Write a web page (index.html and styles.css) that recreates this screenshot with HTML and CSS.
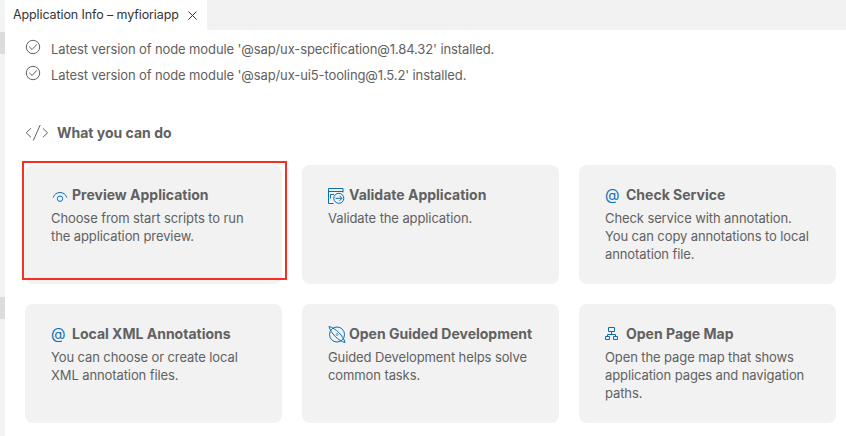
FILE: index.html
```html
<!DOCTYPE html>
<html lang="en">
<head>
<meta charset="utf-8">
<title>Application Info – myfioriapp</title>
<link rel="stylesheet" href="styles.css">
</head>
<body>
<aside class="gutter"><span class="mark"></span><span class="mark"></span></aside>
<main class="editor">
  <header class="tabs">
    <div class="tab"><span class="tab-title">Application Info – myfioriapp</span>
      <svg class="close" width="9" height="9" viewBox="0 0 9 9"><path d="M.5.5l8 8M8.5.5l-8 8"/></svg>
    </div>
  </header>
  <ul class="checks">
    <li><svg class="check" width="16" height="16" viewBox="0 0 16 16"><circle cx="8" cy="8" r="6.7"/><path d="M4.3 7.8l2.8 2.7 4.8-5.2"/></svg><span>Latest version of node module '@sap/ux-specification@1.84.32' installed.</span></li>
    <li><svg class="check" width="16" height="16" viewBox="0 0 16 16"><circle cx="8" cy="8" r="6.7"/><path d="M4.3 7.8l2.8 2.7 4.8-5.2"/></svg><span>Latest version of node module '@sap/ux-ui5-tooling@1.5.2' installed.</span></li>
  </ul>
  <h2 class="section"><svg width="24" height="17" viewBox="0 0 24 17"><path d="M6 4.3L1.2 8.8 6 13.3M17.8 4.3l4.8 4.5-4.8 4.5M15.2 1L8.3 16.5"/></svg><span>What you can do</span></h2>
  <section class="grid">
    <article class="card selected">
      <h3><svg width="18" height="18" viewBox="0 0 18 18"><path d="M2.2 11.5C3.2 8.2 6 6.5 9 6.5s5.8 1.7 6.8 5"/><circle cx="9" cy="12.7" r="2.7"/></svg><span>Preview Application</span></h3>
      <p>Choose from start scripts to run<br>the application preview.</p>
    </article>
    <article class="card">
      <h3><svg width="18" height="18" viewBox="0 0 18 18"><path d="M5.5 17.5h-5v-15h14.500v4M.5 5.5h14.500M2.500 12.500v-4h3.500"/><circle cx="10.8" cy="12.3" r="5"/><path d="M7.500 12.300h6.300M11.500 9.800l2.500 2.500-2.500 2.500"/></svg><span>Validate Application</span></h3>
      <p>Validate the application.</p>
    </article>
    <article class="card">
      <h3><i class="at">@</i><span>Check Service</span></h3>
      <p>Check service with annotation.<br>You can copy annotations to local<br>annotation file.</p>
    </article>
    <article class="card">
      <h3><i class="at">@</i><span>Local XML Annotations</span></h3>
      <p>You can choose or create local<br>XML annotation files.</p>
    </article>
    <article class="card">
      <h3><svg width="18" height="18" viewBox="0 0 18 18"><circle cx="9" cy="9.500" r="7.500"/><path d="M1 1.500C7.500 3 15.500 11 17 17.500 10.500 16 2.500 8 1 1.500z"/><circle class="thin" cx="9" cy="9.500" r="1"/></svg><span>Open Guided Development</span></h3>
      <p>Guided Development helps solve<br>common tasks.</p>
    </article>
    <article class="card">
      <h3><svg width="18" height="18" viewBox="0 0 18 18"><path d="M3.500 2.500h6v4h-6zM.5 11.500h4v3h-4zM8.500 11.500h4v3h-4zM6.500 6.500v3M2.500 11.500v-2h8v2"/></svg><span>Open Page Map</span></h3>
      <p>Open the page map that shows<br>application pages and navigation<br>paths.</p>
    </article>
  </section>
</main>
</body>
</html>
```
FILE: styles.css
```css
* { box-sizing: border-box; }
body {
  margin: 0;
  height: 436px;
  display: flex;
  overflow: hidden;
  background: #fff;
  color: #616161;
  font-family: Inter, "Liberation Sans", sans-serif;
  font-size: 13px;
}
svg { fill: none; stroke: currentColor; flex: none; }
.gutter {
  width: 5px;
  padding-top: 32px;
  display: flex;
  flex-direction: column;
  gap: 243px;
  background: #f3f3f3;
}
.mark { height: 22px; background: #dcdcdc; }
.editor { flex: 1; }
.tabs { height: 30px; background: #f2f2f2; }
.tab {
  width: 202px;
  height: 30px;
  padding-left: 8px;
  display: flex;
  align-items: center;
  background: #fff;
  color: #333;
}
.tab-title {
  width: 175px;
  padding-bottom: 1px;
  font-size: 12.5px;
  letter-spacing: -0.11px;
  white-space: nowrap;
}
.checks {
  list-style: none;
  margin: 0;
  padding: 6px 0 0 20px;
}
.checks li {
  height: 26px;
  display: flex;
  align-items: center;
  gap: 10px;
  letter-spacing: -0.115px;
  white-space: nowrap;
}
.check { position: relative; top: -2px; }
.section {
  margin: 36px 0 0 20px;
  height: 17px;
  display: flex;
  align-items: center;
  gap: 8px;
  font-size: 14px;
  font-weight: 700;
}
.grid {
  margin: 24px 0 0 20px;
  display: grid;
  grid-template-columns: repeat(3, 257px);
  grid-auto-rows: 119px;
  gap: 20px;
}
.card {
  position: relative;
  padding: 20px 0 0 26px;
  border-radius: 8px;
  background: #f2f2f2;
}
.selected::after {
  content: "";
  position: absolute;
  inset: -4px -5px 4px -3px;
  border: 2px solid #f92d20;
}
h3 {
  margin: 0;
  height: 19px;
  display: flex;
  align-items: center;
  gap: 3px;
  font-size: 14px;
  font-weight: 700;
  white-space: nowrap;
}
h3 svg, .at { color: #0a6eb4; }
.thin { stroke-width: 0.6; }
.at { width: 18px; font-size: 15px; font-style: normal; font-weight: 400; }
p {
  margin: 5px 0 0;
  line-height: 18px;
  letter-spacing: -0.1px;
  white-space: nowrap;
}
```
